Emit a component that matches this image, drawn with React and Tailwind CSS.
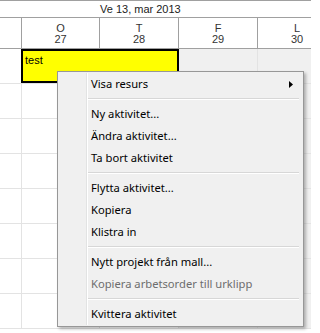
import React from "react";

const days = [
  { letter: "O", num: "27", off: false },
  { letter: "T", num: "28", off: false },
  { letter: "F", num: "29", off: true },
  { letter: "L", num: "30", off: true },
];

const menu = [
  { label: "Visa resurs", sub: true },
  "sep",
  { label: "Ny aktivitet..." },
  { label: "Ändra aktivitet..." },
  { label: "Ta bort aktivitet" },
  "sep",
  { label: "Flytta aktivitet..." },
  { label: "Kopiera" },
  { label: "Klistra in" },
  "sep",
  { label: "Nytt projekt från mall..." },
  { label: "Kopiera arbetsorder till urklipp", disabled: true },
  "sep",
  { label: "Kvittera aktivitet" },
];

function ContextMenu() {
  return (
    <div className="absolute left-[57px] top-[71px] w-[247px] border border-[#979797] bg-[#f0f0f0] py-[1px] shadow-[2px_2px_3px_rgba(0,0,0,0.28)] font-['Noto_Sans',sans-serif] text-[11.2px] text-black">
      {/* icon gutter */}
      <div className="absolute left-[28px] top-[1px] bottom-[1px] w-[2px] border-l border-[#e2e3e3] border-r border-r-white" />
      {menu.map((item, i) =>
        item === "sep" ? (
          <div key={i} className="flex h-[8px] items-center pl-[30px] pr-[4px]">
            <div className="h-[2px] w-full border-t border-[#d7d7d7] border-b border-b-white" />
          </div>
        ) : (
          <div
            key={i}
            className={`relative flex h-[22px] items-center pl-[33px] ${item.disabled ? "text-[#6d6d6d]" : ""}`}
          >
            {item.label}
            {item.sub && (
              <svg className="absolute right-[10px] top-[8px]" width="4" height="7" viewBox="0 0 4 7">
                <path d="M0 0 L4 3.5 L0 7 Z" fill="#000" />
              </svg>
            )}
          </div>
        )
      )}
    </div>
  );
}

export default function App() {
  const rows = Array.from({ length: 8 });
  return (
    <div className="relative h-[333px] w-[311px] overflow-hidden bg-white font-['Liberation_Sans',Arial,sans-serif] text-[11px]">
      <div className="w-[400px]">
        {/* title */}
        <div className="flex h-[18px] items-center border-t border-b border-[#a0a0a0] pl-[100px] pt-[1px] text-[#222]">
          Ve 13, mar 2013
        </div>
        {/* day header */}
        <div className="flex h-[31px] border-b border-[#a0a0a0]">
          <div className="w-[21px] shrink-0" />
          {days.map((d, i) => (
            <div
              key={d.letter}
              className={`flex shrink-0 flex-col items-center justify-center border-l border-[#a0a0a0] pt-[2px] leading-[11px] text-[#333] ${i === 0 ? "w-[78px]" : "w-[79px]"}`}
            >
              <span>{d.letter}</span>
              <span>{d.num}</span>
            </div>
          ))}
        </div>
        {/* body */}
        {rows.map((_, r) => (
          <div key={r} className="flex h-[35px]">
            <div className="w-[21px] shrink-0 border-b border-[#e3e3e3]" />
            {days.map((d, i) => (
              <div
                key={d.letter}
                className={`shrink-0 border-l border-b border-[#e3e3e3] ${i === 0 ? "w-[78px]" : "w-[79px]"} ${d.off ? "bg-[#f0f0f0]" : "bg-white"}`}
              />
            ))}
          </div>
        ))}
      </div>

      {/* activity */}
      <div className="absolute left-[21px] top-[49px] h-[34px] w-[158px] border-2 border-black bg-[#ffff00] px-[2px] pt-[2px] text-[11px] leading-[14px] text-black">
        test
      </div>

      <ContextMenu />
    </div>
  );
}
